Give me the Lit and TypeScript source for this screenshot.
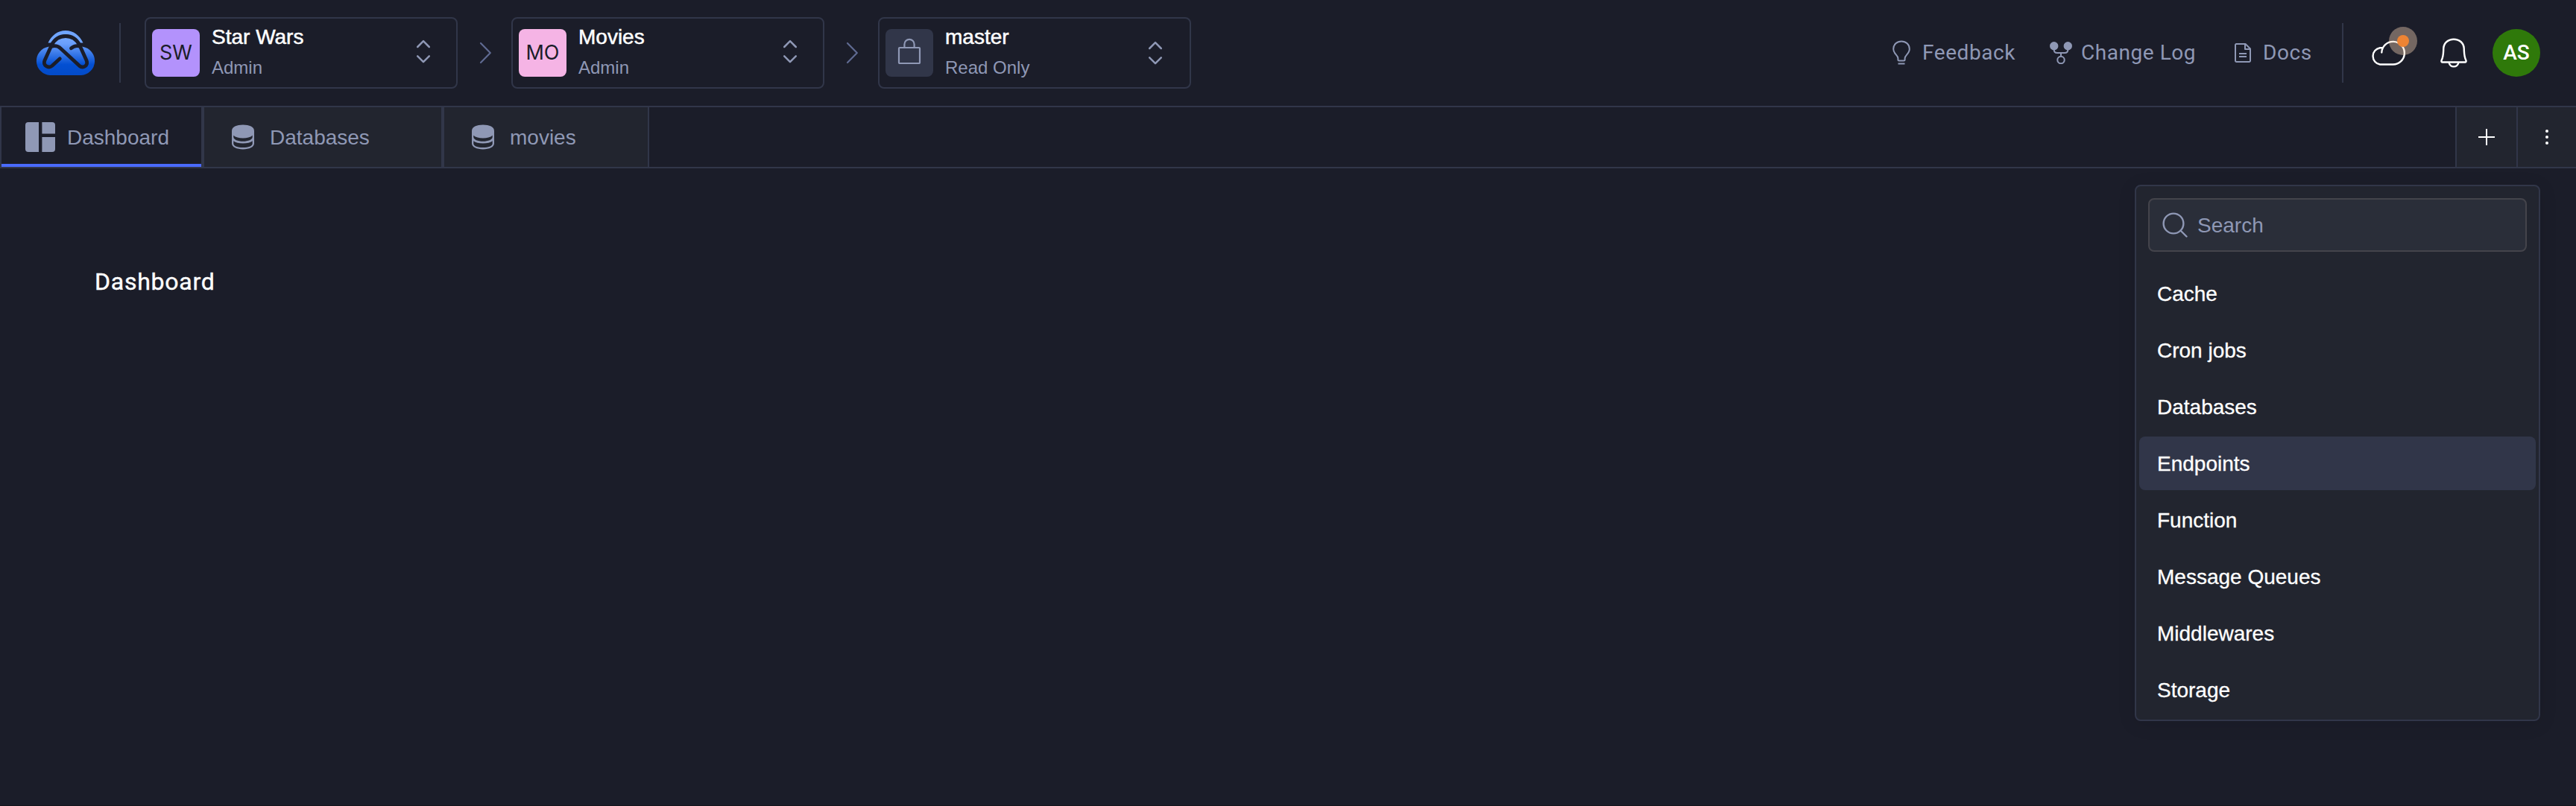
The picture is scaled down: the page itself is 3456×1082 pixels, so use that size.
import { LitElement, html, svg, css } from "lit";
import { customElement } from "lit/decorators.js";
import { classMap } from "lit/directives/class-map.js";

interface Selector {
  kind: string;
  initials?: string;
  name: string;
  role: string;
}

const SELECTORS: Selector[] = [
  { kind: "org", initials: "SW", name: "Star Wars", role: "Admin" },
  { kind: "app", initials: "MO", name: "Movies", role: "Admin" },
  { kind: "version", name: "master", role: "Read Only" },
];

const MENU = [
  "Cache",
  "Cron jobs",
  "Databases",
  "Endpoints",
  "Function",
  "Message Queues",
  "Middlewares",
  "Storage",
];

const logo = html`<svg class="logo" width="80" height="60" viewBox="0 0 80 60">
  <defs>
    <linearGradient id="cloud" gradientUnits="userSpaceOnUse" x1="0" y1="0" x2="0" y2="60">
      <stop offset="0.1" stop-color="#78abff"></stop>
      <stop offset="0.3" stop-color="#6a9ffb"></stop>
      <stop offset="0.76" stop-color="#034fd2"></stop>
      <stop offset="1" stop-color="#034bc8"></stop>
    </linearGradient>
  </defs>
  <path fill="url(#cloud)" d="M19 60A19.300 19.300 0 0 1 17 21.700L23.500 20.500C25 14 31 9.500 40 9.500S55 14 56.500 20.500L63 21.700A19.300 19.300 0 0 1 61 60Z"></path>
  <path fill="#70a5ff" d="M16.500 16.600C21 6.500 29.500 0 40 0S59 6.500 63.500 16.600H58C54 9.500 48 5.200 40 5.200S26 9.500 22 16.600Z"></path>
  <g fill="none" stroke="#1b1d29" stroke-width="4.800" stroke-linecap="round" stroke-linejoin="round">
    <path d="M32.300 37.800L22 47.200C17 51.500 9.200 47 12 40L21.500 19C25.500 11.500 32 7.500 40 7.500S54.500 11.500 58.500 19L68 40C70.800 47 63.500 51.500 58.500 47.300L33 23.800C30 21 26 19.800 21 21.500"></path>
    <path d="M47.500 23.800C50.500 21 54 19.800 58.500 21"></path>
  </g>
  <path fill="none" stroke="#1b1d29" stroke-width="2.400" d="M14 20.800L22 18M66 20.800L58 18"></path>
</svg>`;

const updown = html`<svg class="updown" width="20" height="36" viewBox="0 0 20 36" fill="none" stroke="#8f98b5" stroke-width="2.500" stroke-linecap="round" stroke-linejoin="round">
  <path d="M2.200 12L10 4.200L17.800 12M2.200 24.400L10 32.200L17.800 24.400"></path>
</svg>`;

const crumb = html`<svg class="crumb" width="18" height="32" viewBox="0 0 18 32" fill="none" stroke="#5f6a91" stroke-width="2.200" stroke-linecap="round" stroke-linejoin="round">
  <path d="M3 3L15.800 16L3 29"></path>
</svg>`;

const lock = html`<svg width="32" height="36" viewBox="0 0 32 36" fill="none" stroke="#8f98b5" stroke-width="2.200" stroke-linejoin="round">
  <rect x="2" y="14" width="28" height="21" rx="1"></rect>
  <path d="M9.400 14V9.500a6.600 6.600 0 0 1 13.200 0V14"></path>
</svg>`;

const dashboardIcon = html`<svg width="40" height="40" viewBox="0 0 40 40" fill="#8f98b5">
  <path d="M4 0H18V40H4a4 4 0 0 1-4-4V4a4 4 0 0 1 4-4Z"></path>
  <path d="M22.400 0H36a4 4 0 0 1 4 4V15.500H22.400Z"></path>
  <path d="M22.400 20H40V36a4 4 0 0 1-4 4H22.400Z"></path>
</svg>`;

const databaseIcon = html`<svg width="30" height="34" viewBox="0 0 30 34">
  <path fill="#8f98b5" d="M0 8.500C0 3.500 6.500 .600 15 .600S30 3.500 30 8.500V25.500C30 30.500 23.500 33.400 15 33.400S0 30.500 0 25.500Z"></path>
  <path fill="#22252f" d="M2.300 14.800C5 17.300 9.500 18.500 15 18.500S25 17.300 27.700 14.800V17C27.700 20.300 22 22.800 15 22.800S2.300 20.300 2.300 17Z"></path>
  <path fill="#22252f" d="M2.300 22.300C5 24.700 9.500 25.600 15 25.600S25 24.700 27.700 22.300V26C27.700 29 22 31 15 31S2.300 29 2.300 26Z"></path>
</svg>`;

const bulb = html`<svg width="24" height="34" viewBox="0 0 24 34" fill="none" stroke="#8f98b5" stroke-width="2" stroke-linejoin="round">
  <path d="M9 27.500C8 27.500 7.400 26.800 7.400 26V24C7.400 20.500 1.200 18 1.200 11.800C1.200 5.800 6 1.400 12 1.400S22.800 5.800 22.800 11.800C22.800 18 16.600 20.500 16.600 24V26C16.600 26.800 16 27.500 15 27.500Z"></path>
  <path d="M7.500 31.500H16.500"></path>
</svg>`;

const fork = html`<svg width="30" height="30" viewBox="0 0 30 30" fill="none" stroke="#8f98b5" stroke-width="2">
  <circle cx="5.700" cy="5.700" r="5.700" fill="#8f98b5" stroke="none"></circle>
  <circle cx="24.300" cy="5.700" r="5.700" fill="#8f98b5" stroke="none"></circle>
  <path d="M5.700 10V11C5.700 13.500 7.500 15 10 15H20C22.500 15 24.300 13.500 24.300 11V10M15 15V20"></path>
  <circle cx="15" cy="24.500" r="4.700"></circle>
</svg>`;

const doc = html`<svg width="22" height="26" viewBox="0 0 22 26" fill="none" stroke="#8f98b5" stroke-width="2" stroke-linejoin="round">
  <path d="M3 1H14.500L21 7.500V23.500a1.500 1.500 0 0 1-1.500 1.500H2.500A1.500 1.500 0 0 1 1 23.500V2.500A1.500 1.500 0 0 1 3 1ZM14 1V8H21M6 14H16M6 18H16"></path>
</svg>`;

const cloud = html`<svg class="cloud" width="46" height="34" viewBox="0 0 46 34" fill="none" stroke="#fff" stroke-width="2.400" stroke-linecap="round">
  <path d="M14.500 10.200H12a11.300 11.300 0 0 0 0 22.300H29.500A15.300 15.300 0 1 0 14.300 16.500"></path>
</svg>`;

const bell = html`<svg class="bell" width="36" height="40" viewBox="0 0 36 40" fill="none" stroke="#fff" stroke-width="2.400" stroke-linejoin="round">
  <path d="M18 1.700C10.500 1.700 4.800 6.500 4.300 13.500C3.900 21.500 4.300 24.500 1.600 30C1.100 31.600 1.600 32.500 3 32.500H33C34.400 32.500 34.900 31.600 34.400 30C31.700 24.500 32.100 21.500 31.700 13.500C31.200 6.500 25.500 1.700 18 1.700Z"></path>
  <path d="M11.500 33C12.500 36.500 15 38.400 18 38.400S23.500 36.500 24.500 33"></path>
</svg>`;

const plus = html`<svg width="22" height="22" viewBox="0 0 22 22" stroke="#fff" stroke-width="2"><path d="M11 0V22M0 11H22"></path></svg>`;

const kebab = html`<svg width="4" height="20" viewBox="0 0 4 20" fill="#fff">
  ${[2, 10, 18].map((cy) => svg`<circle cx="2" cy=${cy} r="2"></circle>`)}
</svg>`;

const magnifier = html`<svg width="34" height="34" viewBox="0 0 34 34" fill="none" stroke="#8f98b5" stroke-width="2.400" stroke-linecap="round">
  <circle cx="15" cy="15" r="13.400"></circle>
  <path d="M24.500 24.500L32.500 32.500"></path>
</svg>`;

const LINKS = [
  { kind: "feedback", icon: bulb, label: "Feedback" },
  { kind: "changelog", icon: fork, label: "Change Log" },
  { kind: "docs", icon: doc, label: "Docs" },
];

@customElement("app-root")
export class AppRoot extends LitElement {
  static styles = css`
    :host {
      display: block;
      box-sizing: border-box;
      height: 1082px;
      background: #1b1d29;
      color: #fff;
      font: 28px/36px "Liberation Sans", Arial, sans-serif;
    }
    * { box-sizing: border-box; }
    svg { display: block; flex: none; }
    .page { display: flex; flex-direction: column; height: 1082px; border-bottom: 1px solid #14151c; }
    .topbar { display: flex; align-items: center; height: 142px; padding: 0 48px; flex: none; }
    .divider { width: 2px; height: 80px; background: #313649; }
    .logo { margin-right: 32px; }
    .trail { display: flex; align-items: center; margin-left: 32px; }
    .crumb { margin: 0 26px 0 28px; }
    .selector { display: flex; align-items: center; width: 420px; height: 96px; border: 2px solid #313649; border-radius: 8px; padding: 0 34px 0 8px; }
    .tile { display: flex; align-items: center; justify-content: center; width: 64px; height: 64px; border-radius: 8px; color: #1b1d29; font-family: Inter, sans-serif; font-size: 27px; }
    .tile.org { background: #b392fc; }
    .tile.app { background: #f5b4e5; }
    .tile.version { background: #313649; align-items: flex-start; padding-top: 11px; }
    .labels { display: flex; flex-direction: column; flex: 1; margin-left: 16px; }
    .name { height: 40px; line-height: 34px; -webkit-text-stroke: 0.5px #fff; }
    .role { height: 36px; line-height: 36px; font-size: 24px; color: #8f98b5; }
    .updown { margin-top: -4px; }
    .selector.version { padding-right: 36px; }
    .selector.version .updown { margin-top: 0; }
    .links { display: grid; grid-template-columns: 211px 248px 144px 2px; align-items: center; margin-left: auto; color: #8f98b5; font-family: Roboto, sans-serif; letter-spacing: 0.55px; }
    .link { display: flex; align-items: center; gap: 16px; }
    .link.changelog { gap: 12px; }
    .status { display: flex; align-items: center; margin-left: 37px; }
    .cloudbox { position: relative; margin-right: 47px; }
    .pulse { position: absolute; left: 24px; top: -18px; width: 38px; height: 38px; border-radius: 50%; background: rgba(250, 214, 186, 0.4); display: flex; align-items: center; justify-content: center; }
    .dot { width: 16px; height: 16px; border-radius: 50%; background: #ee8434; }
    .avatar { display: flex; align-items: center; justify-content: center; width: 64px; height: 64px; border-radius: 50%; background: #2f790a; margin-left: 34px; font-family: Roboto, sans-serif; font-weight: 500; }
    .tabs { display: flex; height: 84px; border-top: 2px solid #313649; border-bottom: 2px solid #313649; flex: none; color: #8f98b5; }
    .tab { display: flex; align-items: center; border: solid #313649; border-width: 0 2px; background: #22252f; }
    .tab span, .search span { padding-top: 2px; }
    .tab.active { background: linear-gradient(#4a6bff, #4a6bff) bottom / 100% 4px no-repeat #1b1d29; }
    .tab.first { width: 272px; padding-left: 32px; gap: 16px; }
    .tab.databases { width: 322px; padding-left: 37px; gap: 21px; }
    .tab.movies { width: 277px; padding-left: 37px; gap: 21px; }
    .spacer { flex: 1; }
    .action { display: flex; align-items: center; justify-content: center; border-left: 2px solid #313649; background: #22252f; width: 82px; }
    .action.more { width: 80px; }
    .content { display: flex; justify-content: space-between; align-items: flex-start; flex: 1; padding: 22px 48px 0 127px; }
    .title { margin: 110px 0 0; font: 400 32px/40px Roboto, sans-serif; letter-spacing: 0.75px; -webkit-text-stroke: 0.4px #fff; }
    .panel { width: 544px; height: 720px; border: 2px solid #313649; border-radius: 8px; background: #22252f; padding: 16px 4px 0; box-shadow: 0 4px 24px rgba(0, 0, 0, 0.1); }
    .search { display: flex; align-items: center; gap: 13px; height: 72px; margin: 0 12px; padding-left: 17px; border: 2px solid #44444b; border-radius: 8px; background: #2a2e39; color: #8f98b5; }
    .menu { display: flex; flex-direction: column; gap: 4px; margin-top: 20px; }
    .item { display: flex; align-items: center; height: 72px; padding: 2px 0 0 24px; border-radius: 8px; -webkit-text-stroke: 0.3px #fff; }
    .item.current { background: #313649; }
  `;

  private renderSelector(s: Selector, i: number) {
    return html`${i > 0 ? crumb : null}
      <div class="selector ${s.kind}">
        <div class="tile ${s.kind}">${s.initials ?? lock}</div>
        <div class="labels"><span class="name">${s.name}</span><span class="role">${s.role}</span></div>
        ${updown}
      </div>`;
  }

  render() {
    return html`<div class="page">
      <header class="topbar">
        ${logo}
        <div class="divider"></div>
        <nav class="trail">${SELECTORS.map((s, i) => this.renderSelector(s, i))}</nav>
        <div class="links">
          ${LINKS.map((l) => html`<div class="link ${l.kind}">${l.icon}<span>${l.label}</span></div>`)}
          <div class="divider"></div>
        </div>
        <div class="status">
          <div class="cloudbox">${cloud}<div class="pulse"><div class="dot"></div></div></div>
          ${bell}
          <div class="avatar">AS</div>
        </div>
      </header>
      <div class="tabs">
        <div class="tab first active">${dashboardIcon}<span>Dashboard</span></div>
        <div class="tab databases">${databaseIcon}<span>Databases</span></div>
        <div class="tab movies">${databaseIcon}<span>movies</span></div>
        <div class="spacer"></div>
        <div class="action">${plus}</div>
        <div class="action more">${kebab}</div>
      </div>
      <main class="content">
        <h1 class="title">Dashboard</h1>
        <aside class="panel">
          <div class="search">${magnifier}<span>Search</span></div>
          <div class="menu">
            ${MENU.map((m) => html`<div class=${classMap({ item: true, current: m === "Endpoints" })}>${m}</div>`)}
          </div>
        </aside>
      </main>
    </div>`;
  }
}
